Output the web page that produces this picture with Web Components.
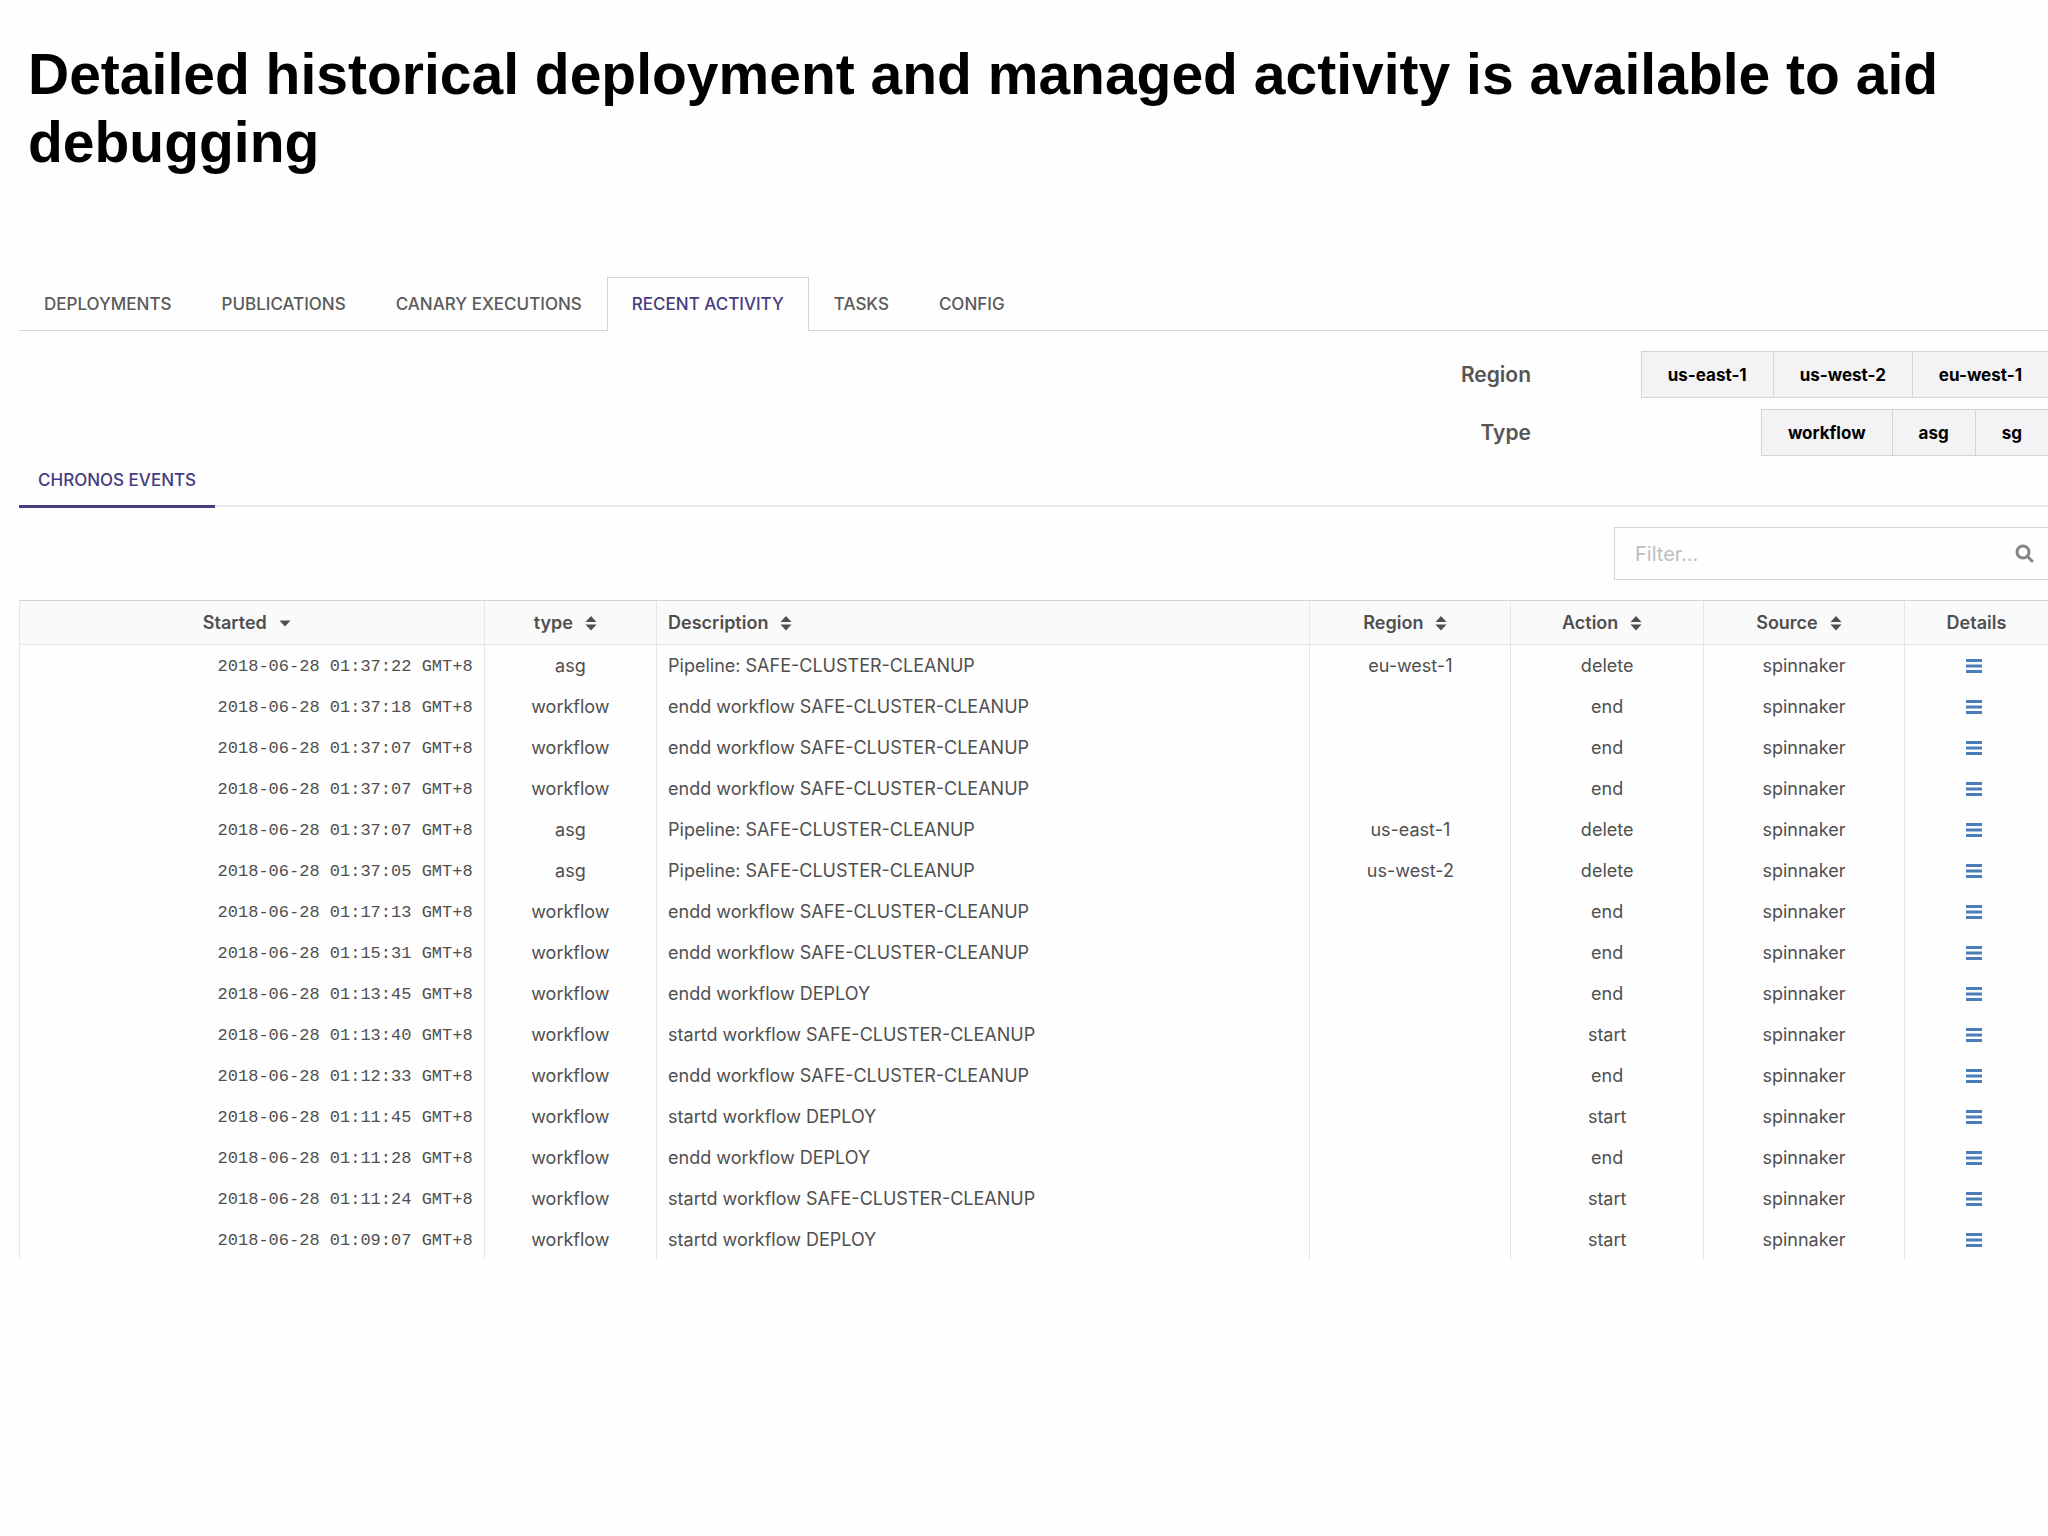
<!DOCTYPE html>
<html lang="en">
<head>
<meta charset="utf-8">
<meta name="viewport" content="width=device-width, initial-scale=1">
<title>Recent Activity</title>
<style>
    body {
        margin: 0;
        background: #fefefe;
        color: #4f4f4f;
        font-family: Inter, "Noto Sans", sans-serif;
        font-size: 18px;
        overflow-x: hidden;
        --line: #d4d3d6;
        --line-soft: #e6e5e8;
        --accent: #463c80;
    }
</style>
</head>
<body>
<slide-page>
    <slide-heading slot="heading">Detailed historical deployment and managed activity is available to aid debugging</slide-heading>
    <main-tabs></main-tabs>
    <option-filters>
        <option-group label="Region" options="us-east-1,us-west-2,eu-west-1"></option-group>
        <option-group label="Type" options="workflow,asg,sg"></option-group>
    </option-filters>
    <sub-tabs>CHRONOS EVENTS</sub-tabs>
    <filter-box></filter-box>
    <events-table></events-table>
</slide-page>

<script>
class SlidePage extends HTMLElement {
    connectedCallback() {
        this.attachShadow({ mode: 'open' });
        this.shadowRoot.innerHTML = `
            <style>
                :host { display: block; }
                main {
                    display: flex;
                    flex-direction: column;
                    padding: 101px 0 0 19px;
                }
            </style>
            <slot name="heading"></slot>
            <main><slot></slot></main>
        `;
    }
}
customElements.define('slide-page', SlidePage);

class SlideHeading extends HTMLElement {
    connectedCallback() {
        this.attachShadow({ mode: 'open' });
        this.shadowRoot.innerHTML = `
            <style>
                :host { display: block; padding: 40px 28px 0; }
                h1 {
                    margin: 0;
                    color: #000;
                    font: bold 57px/68px "Liberation Sans", Arial, sans-serif;
                }
            </style>
            <h1><slot></slot></h1>
        `;
    }
}
customElements.define('slide-heading', SlideHeading);

class MainTabs extends HTMLElement {
    connectedCallback() {
        const tabs = ['DEPLOYMENTS', 'PUBLICATIONS', 'CANARY EXECUTIONS', 'RECENT ACTIVITY', 'TASKS', 'CONFIG'];
        this.attachShadow({ mode: 'open' });
        this.shadowRoot.innerHTML = `
            <style>
                :host { display: block; }
                nav {
                    display: flex;
                    border-bottom: 1px solid var(--line);
                }
                a {
                    padding: 0 24px;
                    border: 1px solid transparent;
                    border-bottom: 0;
                    color: #5a5a5a;
                    font-size: 17px;
                    font-weight: 500;
                    line-height: 52px;
                    text-decoration: none;
                    white-space: nowrap;
                }
                a.active {
                    margin-bottom: -1px;
                    border-color: var(--line);
                    background: #fefefe;
                    color: var(--accent);
                }
            </style>
            <nav>
                ${tabs.map(t => `<a href="#"${t === 'RECENT ACTIVITY' ? ' class="active"' : ''}>${t}</a>`).join('')}
            </nav>
        `;
    }
}
customElements.define('main-tabs', MainTabs);

class OptionFilters extends HTMLElement {
    connectedCallback() {
        this.attachShadow({ mode: 'open' });
        this.shadowRoot.innerHTML = `
            <style>
                :host {
                    display: flex;
                    flex-direction: column;
                    gap: 11px;
                    padding-top: 20px;
                }
            </style>
            <slot></slot>
        `;
    }
}
customElements.define('option-filters', OptionFilters);

class OptionGroup extends HTMLElement {
    connectedCallback() {
        const label = this.getAttribute('label');
        const options = this.getAttribute('options').split(',');
        this.attachShadow({ mode: 'open' });
        this.shadowRoot.innerHTML = `
            <style>
                :host {
                    display: grid;
                    grid-template-columns: 1fr 517px;
                    align-items: center;
                }
                #label {
                    color: #555;
                    font-size: 21px;
                    font-weight: 600;
                    line-height: 28px;
                    text-align: right;
                }
                .buttons {
                    display: flex;
                    justify-content: flex-end;
                }
                button {
                    height: 47px;
                    padding: 0 26px;
                    border: 1px solid var(--line);
                    border-right: 0;
                    background: #f3f2f5;
                    color: #000;
                    font: bold 17px/44px Inter, "Noto Sans", sans-serif;
                }
            </style>
            <span id="label">${label}</span>
            <div class="buttons" role="group" aria-labelledby="label">
                ${options.map(o => `<button type="button">${o}</button>`).join('')}
            </div>
        `;
    }
}
customElements.define('option-group', OptionGroup);

class SubTabs extends HTMLElement {
    connectedCallback() {
        this.attachShadow({ mode: 'open' });
        this.shadowRoot.innerHTML = `
            <style>
                :host {
                    display: flex;
                    border-bottom: 2px solid var(--line-soft);
                }
                a {
                    margin-bottom: -3px;
                    padding: 0 19px;
                    border-bottom: 3px solid var(--accent);
                    color: var(--accent);
                    font-size: 17px;
                    font-weight: 500;
                    line-height: 49px;
                    text-decoration: none;
                }
            </style>
            <a href="#"><slot></slot></a>
        `;
    }
}
customElements.define('sub-tabs', SubTabs);

class FilterBox extends HTMLElement {
    connectedCallback() {
        this.attachShadow({ mode: 'open' });
        this.shadowRoot.innerHTML = `
            <style>
                :host {
                    display: flex;
                    justify-content: flex-end;
                    padding: 20px 0;
                }
                label {
                    display: flex;
                    align-items: center;
                    box-sizing: border-box;
                    width: 434px;
                    height: 53px;
                    padding: 0 14px 0 20px;
                    border: 1px solid var(--line);
                    border-right: 0;
                }
                input {
                    flex: 1;
                    min-width: 0;
                    padding: 0;
                    border: 0;
                    outline: 0;
                    background: none;
                    color: #4f4f4f;
                    font: 20px/28px Inter, "Noto Sans", sans-serif;
                }
                input::placeholder { color: #bebdc0; }
            </style>
            <label>
                <input type="text" placeholder="Filter..." aria-label="Filter">
                <svg width="19" height="19" viewBox="0 0 19 19" fill="none" stroke="#858585">
                    <circle cx="8" cy="8" r="6" stroke-width="3"/>
                    <path d="M12.500 12.500L17 17" stroke-width="3" stroke-linecap="round"/>
                </svg>
            </label>
        `;
    }
}
customElements.define('filter-box', FilterBox);

class EventsTable extends HTMLElement {
    connectedCallback() {
        const safe = 'SAFE-CLUSTER-CLEANUP';
        const events = [
            ['01:37:22', 'asg', `Pipeline: ${safe}`, 'eu-west-1', 'delete'],
            ['01:37:18', 'workflow', `endd workflow ${safe}`, '', 'end'],
            ['01:37:07', 'workflow', `endd workflow ${safe}`, '', 'end'],
            ['01:37:07', 'workflow', `endd workflow ${safe}`, '', 'end'],
            ['01:37:07', 'asg', `Pipeline: ${safe}`, 'us-east-1', 'delete'],
            ['01:37:05', 'asg', `Pipeline: ${safe}`, 'us-west-2', 'delete'],
            ['01:17:13', 'workflow', `endd workflow ${safe}`, '', 'end'],
            ['01:15:31', 'workflow', `endd workflow ${safe}`, '', 'end'],
            ['01:13:45', 'workflow', 'endd workflow DEPLOY', '', 'end'],
            ['01:13:40', 'workflow', `startd workflow ${safe}`, '', 'start'],
            ['01:12:33', 'workflow', `endd workflow ${safe}`, '', 'end'],
            ['01:11:45', 'workflow', 'startd workflow DEPLOY', '', 'start'],
            ['01:11:28', 'workflow', 'endd workflow DEPLOY', '', 'end'],
            ['01:11:24', 'workflow', `startd workflow ${safe}`, '', 'start'],
            ['01:09:07', 'workflow', 'startd workflow DEPLOY', '', 'start']
        ];
        const sort = '<svg width="12" height="16" viewBox="0 0 12 16" fill="#4f4f4f"><path d="M6 1L11.500 7H.5zM.5 9.500H11.500L6 15.500z"/></svg>';
        const sorted = '<svg width="12" height="16" viewBox="0 0 12 16" fill="#4f4f4f"><path d="M.5 5.500H11.500L6 11.500z"/></svg>';
        const menu = '<svg width="16" height="16" viewBox="0 0 16 16" fill="#4a7ebb"><path d="M0 1h16v3H0zM0 6.500h16v3H0zM0 12h16v3H0z"/></svg>';

        this.attachShadow({ mode: 'open' });
        this.shadowRoot.innerHTML = `
            <style>
                :host { display: block; }
                table {
                    width: 100%;
                    table-layout: fixed;
                    border-collapse: separate;
                    border-spacing: 0;
                }
                col:nth-child(1) { width: 22.9%; }
                col:nth-child(2) { width: 8.5%; }
                col:nth-child(3) { width: 32.2%; }
                col:nth-child(4) { width: 9.9%; }
                col:nth-child(5) { width: 9.5%; }
                col:nth-child(6) { width: 9.9%; }
                th, td {
                    height: 41px;
                    box-sizing: border-box;
                    padding: 0 11px;
                    border-left: 1px solid var(--line-soft);
                    line-height: 24px;
                    text-align: center;
                    white-space: nowrap;
                }
                th {
                    height: 45px;
                    border-top: 1px solid var(--line);
                    border-bottom: 1px solid var(--line-soft);
                    background: #fafafb;
                    font-weight: 600;
                }
                th button {
                    display: inline-flex;
                    align-items: center;
                    gap: 12px;
                    padding: 0 10px 0 0;
                    border: 0;
                    background: none;
                    color: inherit;
                    font: inherit;
                }
                th:nth-child(3), td:nth-child(3) { text-align: left; }
                td:first-child {
                    padding-top: 2px;
                    font-family: "Liberation Mono", monospace;
                    font-size: 17px;
                    text-align: right;
                }
                td a {
                    display: flex;
                    justify-content: center;
                    padding-right: 4px;
                }
            </style>
            <table>
                <colgroup><col><col><col><col><col><col><col></colgroup>
                <thead>
                    <tr>
                        <th><button type="button">Started${sorted}</button></th>
                        ${['type', 'Description', 'Region', 'Action', 'Source'].map(h => `<th><button type="button">${h}${sort}</button></th>`).join('')}
                        <th>Details</th>
                    </tr>
                </thead>
                <tbody>
                    ${events.map(([time, type, text, region, action]) => `
                        <tr>
                            <td>2018-06-28 ${time} GMT+8</td>
                            <td>${type}</td>
                            <td>${text}</td>
                            <td>${region}</td>
                            <td>${action}</td>
                            <td>spinnaker</td>
                            <td><a href="#" aria-label="Details">${menu}</a></td>
                        </tr>
                    `).join('')}
                </tbody>
            </table>
        `;
    }
}
customElements.define('events-table', EventsTable);
</script>
</body>
</html>
